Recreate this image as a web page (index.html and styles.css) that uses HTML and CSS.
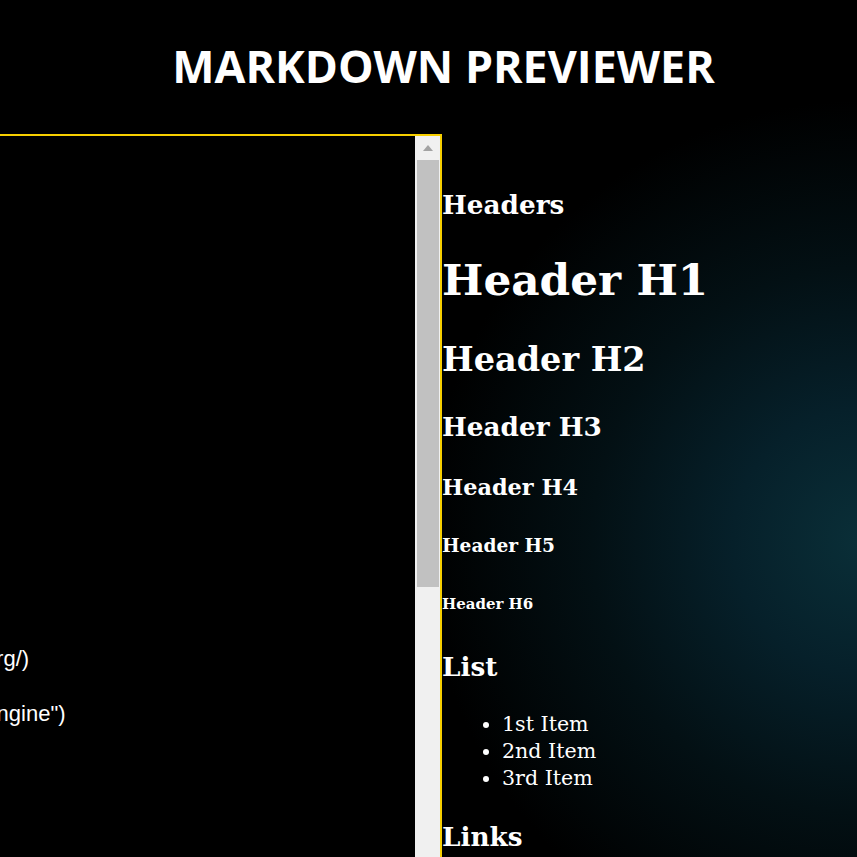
FILE: index.html
```html
<!DOCTYPE html>
<html lang="en">
<head>
<meta charset="utf-8">
<title>Markdown Previewer</title>
<link rel="stylesheet" href="styles.css">
</head>
<body>
<header class="topbar">
  <h1 class="title">MARKDOWN PREVIEWER</h1>
</header>
<main class="workspace">
  <section class="editor-pane">
    <div class="editor-box">
      <textarea class="editor" wrap="off" spellcheck="false">### Headers
# Header H1
## Header H2
### Header H3
#### Header H4
##### Header H5
###### Header H6

### List

- 1st Item
- 2nd Item
- 3rd Item

### Links

Websites:

[freeCodeCamp](https://www.freecodecamp.org/)

[Google](https://google.com "Google search engine")

### Inline Code

`&lt;div&gt;&lt;/div&gt;`

### Code Block

~~~
function hello() {
  console.log("Hello!");
}
~~~

### Blockquote

&gt; Markdown is great!</textarea>
      <div class="scrollbar" aria-hidden="true">
        <div class="sb-button"><span class="sb-arrow"></span></div>
        <div class="sb-thumb"></div>
      </div>
    </div>
  </section>
  <section class="preview">
    <h3 class="h-sub">Headers</h3>
    <h1 class="h-1">Header H1</h1>
    <h2 class="h-2">Header H2</h2>
    <h3 class="h-3">Header H3</h3>
    <h4 class="h-4">Header H4</h4>
    <h5 class="h-5">Header H5</h5>
    <h6 class="h-6">Header H6</h6>
    <h3 class="h-sub">List</h3>
    <ul class="list">
      <li>1st Item</li>
      <li>2nd Item</li>
      <li>3rd Item</li>
    </ul>
    <h3 class="h-sub">Links</h3>
    <p class="para">Websites:</p>
  </section>
</main>
</body>
</html>
```
FILE: styles.css
```css
html, body {
  margin: 0;
  height: 100%;
  overflow: hidden;
}

body {
  color: #fff;
  background-color: #000;
  background-image: radial-gradient(circle 440px at 865px 540px, #0a2f38 0%, #06202a 30%, #031014 62%, #000 100%);
}

.topbar {
  padding: 36px 0 0 30px;
}

.title {
  margin: 0;
  text-align: center;
  font-family: "Open Sans", "Noto Sans", sans-serif;
  font-weight: 700;
  font-size: 44.8px;
  line-height: 60px;
  color: #fff;
}

.workspace {
  display: flex;
  align-items: flex-start;
  margin-top: 38px;
}

.editor-pane {
  flex: 0 0 442px;
  width: 442px;
}

.editor-box {
  display: flex;
  box-sizing: border-box;
  width: 907px;
  height: 800px;
  margin-left: -465px;
  border: 2px solid #f7cf00;
  background: #000;
}

.editor {
  flex: 1;
  min-width: 0;
  display: block;
  box-sizing: border-box;
  height: 100%;
  margin: 0;
  padding: 14px;
  border: 0;
  background: #000;
  color: #fff;
  font-family: "Liberation Sans", Arial, sans-serif;
  font-size: 22px;
  line-height: 27.5px;
  white-space: pre;
  overflow: hidden;
  resize: none;
  outline: none;
}

.scrollbar {
  flex: 0 0 25px;
  display: flex;
  flex-direction: column;
  background: #f0f0f0;
}

.sb-button {
  height: 24px;
  display: flex;
  align-items: center;
  justify-content: center;
}

.sb-arrow {
  width: 0;
  height: 0;
  border-left: 5.5px solid transparent;
  border-right: 5.5px solid transparent;
  border-bottom: 6px solid #a3a3a3;
}

.sb-thumb {
  height: 427px;
  margin: 0 1px 0 2px;
  background: #c1c1c1;
}

.preview {
  flex: 1;
  padding-top: 27px;
  font-family: "DejaVu Serif", Georgia, serif;
  font-size: 20px;
  color: #fff;
}

.preview h1, .preview h2, .preview h3, .preview h4, .preview h5, .preview h6 {
  font-weight: 700;
}

.h-sub, .h-3 {
  font-size: 26.3px;
  line-height: 31.9px;
  margin: 28.08px 0;
}

.h-1 {
  font-size: 43.8px;
  line-height: 54.5px;
  margin: 32.16px 0;
}

.h-2 {
  font-size: 33.5px;
  line-height: 40.9px;
  margin: 29.88px 0;
}

.h-4 {
  font-size: 22.4px;
  line-height: 27.26px;
  margin: 31.92px 0;
}

.h-5 {
  font-size: 18.6px;
  line-height: 22.63px;
  margin: 33.27px 0;
}

.h-6 {
  font-size: 15px;
  line-height: 18.27px;
  margin: 37.47px 0;
}

.list {
  margin: 24px 0;
  padding-left: 60px;
  font-size: 20.6px;
  line-height: 27.26px;
}

.para {
  margin: 24px 0;
  font-size: 20.6px;
  line-height: 27.26px;
}
```
